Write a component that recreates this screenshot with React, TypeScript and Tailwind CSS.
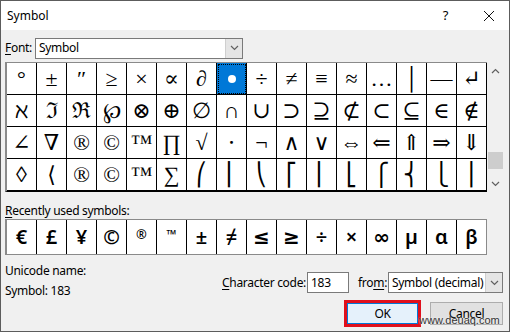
import React from "react";

const rows: string[][] = [
  ["°", "±", "″", "≥", "×", "∝", "∂", "•", "÷", "≠", "≡", "≈", "…", "│", "—", "↵"],
  ["ℵ", "ℑ", "ℜ", "℘", "⊗", "⊕", "∅", "∩", "∪", "⊃", "⊇", "⊄", "⊂", "⊆", "∈", "∉"],
  ["∠", "∇", "®", "©", "™", "∏", "√", "⋅", "¬", "∧", "∨", "⇔", "⇐", "⇑", "⇒", "⇓"],
  ["◊", "⟨", "®", "©", "™", "∑", "⎛", "⎜", "⎝", "⎡", "⎢", "⎣", "⎧", "⎨", "⎩", "⎪"],
];

const recent = ["€", "£", "¥", "©", "®", "™", "±", "≠", "≤", "≥", "÷", "×", "∞", "µ", "α", "β"];

function Chevron({ up = false }: { up?: boolean }) {
  return (
    <svg width="9" height="6" viewBox="0 0 9 6" className={up ? "rotate-180" : ""}>
      <polyline points="1,1 4.5,4.5 8,1" fill="none" stroke="#606060" strokeWidth="1.2" />
    </svg>
  );
}

function Combo({ value, width }: { value: string; width: string }) {
  return (
    <div className={`flex h-[21px] ${width} items-center border border-[#7a7a7a] bg-white`}>
      <span className="flex-1 whitespace-nowrap pl-[3px]">{value}</span>
      <div className="flex h-full w-[17px] items-center justify-center border-l border-[#cfcfcf] bg-[#e5e5e5]">
        <Chevron />
      </div>
    </div>
  );
}

export default function App() {
  return (
    <div className="relative h-[332px] w-[510px] overflow-hidden border border-[#5c5c5c] bg-[#f0f0f0] font-['Noto_Sans',sans-serif] text-[12px] tracking-[-0.3px] text-black">
      <div className="flex h-[29px] items-center bg-white pl-[6px]">
        <span className="flex-1 text-[12px] tracking-normal">Symbol</span>
        <span className="mr-[35px] text-[13px]">?</span>
        <svg width="12" height="12" viewBox="0 0 12 12" className="mr-[14px]">
          <path d="M1 1L11 11M11 1L1 11" stroke="#111" strokeWidth="1" />
        </svg>
      </div>

      <div className="pl-[4px]">
        <div className="mt-[8px] flex h-[20px] items-center">
          <span className="w-[30px]">
            <span className="underline underline-offset-2">F</span>ont:
          </span>
          <Combo value="Symbol" width="w-[208px]" />
        </div>

        <div className="mt-[4px] flex">
          <div className="border-b border-l-2 border-t border-b-black border-l-[#8a8a8a] border-t-[#8a8a8a] bg-white">
            {rows.map((row, r) => (
              <div key={r} className="flex">
                {row.map((ch, c) => {
                  const sel = r === 0 && c === 7;
                  return (
                    <div
                      key={c}
                      className={`flex h-[32px] w-[30px] items-center justify-center border-b border-r border-black font-['Liberation_Serif','DejaVu_Serif',serif] text-[22px] leading-none tracking-normal ${
                        sel ? "bg-[#0078d7] text-white outline-1 outline-dotted -outline-offset-2 outline-black" : ""
                      }`}
                    >
                      {sel ? <span className="h-[8px] w-[8px] rounded-full bg-white" /> : ch}
                    </div>
                  );
                })}
              </div>
            ))}
          </div>
          <div className="relative flex h-[130px] w-[16px] flex-col items-center">
            <div className="mt-[6px]">
              <Chevron up />
            </div>
            <div className="mt-[78px] h-[17px] w-[15px] bg-[#cdcdcd]" />
            <div className="mt-[12px]">
              <Chevron />
            </div>
          </div>
        </div>

        <div className="mt-[10px] h-[17px] leading-[17px]">
          <span className="underline underline-offset-2">R</span>ecently used symbols:
        </div>

        <div className="inline-flex border-b border-l-2 border-t border-[#8a8a8a] bg-white">
          {recent.map((ch, i) => (
            <div
              key={i}
              className={`flex h-[34px] w-[30px] justify-center border-r border-black font-['Noto_Sans','DejaVu_Sans',sans-serif] font-semibold tracking-normal ${
                ch === "®" || ch === "™"
                  ? "items-start pt-[5px] text-[13px]"
                  : "items-center text-[20px]"
              } ${i === 15 ? "border-r-[#8a8a8a]" : ""}`}
            >
              {ch}
            </div>
          ))}
        </div>

        <div className="mt-[8px] flex">
          <div className="w-[217px] leading-[16px]">
            <div>Unicode name:</div>
            <div className="mt-[4px]">Symbol: 183</div>
          </div>
          <div className="flex flex-col pt-[9px]">
            <div className="flex h-[21px] items-center whitespace-nowrap">
              <span className="w-[85px]">
                <span className="underline underline-offset-2">C</span>haracter code:
              </span>
              <div className="flex h-[21px] w-[42px] items-center border border-[#7a7a7a] bg-white pl-[3px]">183</div>
              <span className="ml-[9px] w-[30px]">
                fro<span className="underline underline-offset-2">m</span>:
              </span>
              <Combo value="Symbol (decimal)" width="w-[115px]" />
            </div>
            <div className="mt-[7px] flex items-center">
              <div className="ml-[122px] h-[27px] w-[77px] border-[3px] border-[#e0101c] bg-[#e5f1fb]">
                <div className="flex h-full items-center justify-center border border-[#0078d7]">OK</div>
              </div>
              <div className="ml-[9px] flex h-[23px] w-[73px] items-center justify-center border border-[#adadad] bg-[#e1e1e1]">
                Cancel
              </div>
            </div>
          </div>
        </div>
      </div>

      <span className="absolute left-[418px] top-[311px] font-['Liberation_Sans',sans-serif] text-[11px] tracking-normal text-[#333] [text-shadow:0_0_2px_#fff]">
        www.deuaq.com
      </span>
    </div>
  );
}
